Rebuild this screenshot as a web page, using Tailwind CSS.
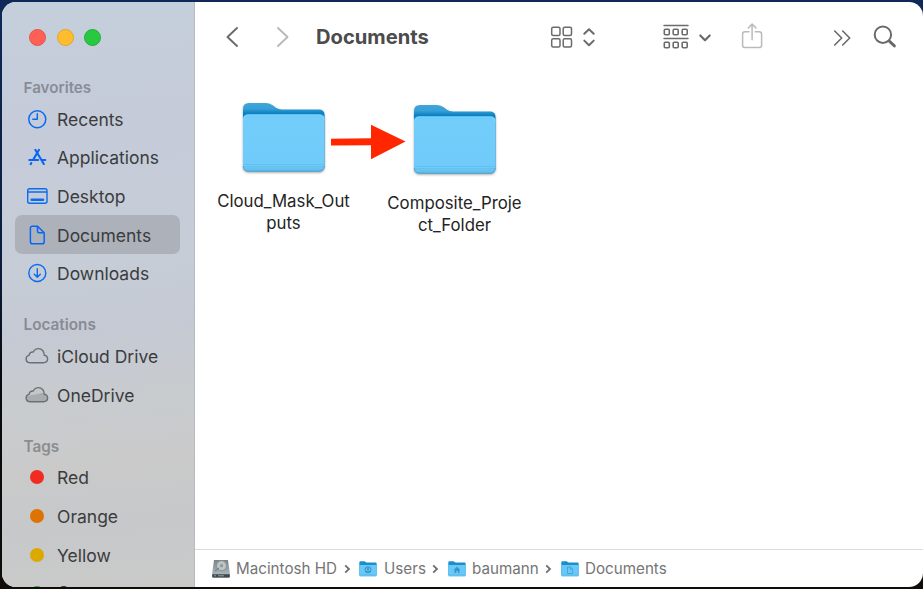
<!DOCTYPE html>
<html lang="en">
<head>
<meta charset="utf-8">
<title>Documents</title>
<script src="https://cdn.jsdelivr.net/npm/@tailwindcss/browser@4"></script>
</head>
<body class="w-[923px] h-[589px] overflow-hidden bg-[linear-gradient(180deg,#102858_0%,#0c1d3c_45%,#070a0e_65%,#100d08_100%)] font-['Inter','Liberation_Sans',sans-serif]">
<svg class="absolute size-0">
  <defs>
    <linearGradient id="back" x1="0" y1="0" x2="0" y2="1"><stop offset="0" stop-color="#41a5da"/><stop offset=".09" stop-color="#36a0d8"/><stop offset=".16" stop-color="#0b80c2"/><stop offset="1" stop-color="#0b80c2"/></linearGradient>
    <linearGradient id="front" x1="0" y1="0" x2="0" y2="1"><stop offset="0" stop-color="#6ccaf8"/><stop offset=".08" stop-color="#72cdfb"/><stop offset=".9" stop-color="#70cbfa"/><stop offset="1" stop-color="#5bb9e8"/></linearGradient>
    <linearGradient id="cloudfill" x1=".3" y1="0" x2=".6" y2="1"><stop offset=".45" stop-color="#b9bcbf" stop-opacity=".3"/><stop offset=".5" stop-color="#a9acaf"/></linearGradient>
    <linearGradient id="disk" x1="0" y1="0" x2="0" y2="1"><stop offset="0" stop-color="#7d8486"/><stop offset="1" stop-color="#b4c1c7"/></linearGradient>
    <symbol id="folder" viewBox="0 0 84 72">
      <path d="M1 65V7Q1 1 7 1H24Q28 1 31 3.5L34 5.800Q36.500 7.500 40 7.500H77Q82.500 7.500 82.500 13V65Z" fill="url(#back)"/>
      <path d="M1 17Q1 12.500 6 12.500H77.500Q82.500 12.500 82.500 17V64Q82.500 69.500 77 69.500H6.500Q1 69.500 1 64Z" fill="url(#front)"/>
      <path d="M2 17.500Q2.500 12.800 6 12.800H77.500Q81.300 12.800 82 17.500" fill="none" stroke="#8bd9fd" stroke-width=".7"/>
      <path d="M1.500 62.500H82M1.500 64.800H82" stroke="#5dbbe9" stroke-width=".7"/>
      <path d="M1.300 64Q1.300 69.300 6.500 69.300H77Q82.200 69.300 82.200 64" fill="none" stroke="#479dc8" stroke-width=".8"/>
    </symbol>
    <symbol id="minifolder" viewBox="0 0 18 16">
      <path d="M.3 14V1.500Q.3.300 1.500.300H5.500L7.500 1.500H16.500Q17.700 1.500 17.700 2.700V14Z" fill="#1b8ecb"/>
      <path d="M.3 4H17.700V14.300Q17.700 15.500 16.500 15.500H1.500Q.3 15.500.3 14.300Z" fill="#6ac8f8"/>
      <path d="M.5 14H17.500" stroke="#55b3e3" stroke-width=".8"/>
    </symbol>
    <symbol id="cloud" viewBox="0 0 24 18">
      <path d="M6 15.700H18.300C21 15.700 22.600 14.200 22.600 12C22.600 10 21.100 8.600 19.300 8.300C19.400 4.400 16.800 1.600 13.500 1.600C11 1.600 9.200 2.800 8.200 5C6.200 4.600 4.300 6 4.200 8.100C2.300 8.600 1.100 10 1.100 11.900C1.100 14.200 3 15.700 6 15.700Z" stroke="#6d6f72" stroke-width="1.400"/>
    </symbol>
  </defs>
</svg>
<div class="ml-[2px] mt-[2px] w-[921px] h-[585px] rounded-[14px] overflow-hidden flex bg-white">
  <aside class="w-[193px] shrink-0 h-full overflow-hidden border-r border-[#b7bac0] bg-[linear-gradient(175deg,#c5cfdc_0%,#c5cbd9_20%,#c6cdd7_45%,#c5c9d3_56%,#c8cccf_68%,#cacaca_78%,#c6c8ca_88%,#cacac9_100%)] text-[17.500px] text-[#3b3c3e]">
    <div class="h-[73.500px] pl-[27px] flex items-start gap-[10.500px] pt-[27px]">
      <span class="size-[17px] rounded-full bg-[#fe5f57] border border-[#e5534e]"></span>
      <span class="size-[17px] rounded-full bg-[#febc2e] border border-[#e0a62e]"></span>
      <span class="size-[17px] rounded-full bg-[#28c840] border border-[#25ad38]"></span>
    </div>
    <h2 class="h-[24px] pt-[2px] pl-[21.500px] flex items-center text-[15.200px] font-semibold text-[#888d97]">Favorites</h2>
    <nav>
      <div class="h-[38.660px] pl-[23px] flex items-center gap-[8px]">
        <svg class="w-[24px] h-[24px]" viewBox="0 0 24 24" fill="none" stroke="#0a6bf0" stroke-width="1.500" stroke-linecap="round" stroke-linejoin="round"><circle cx="12.300" cy="12.300" r="8.500"/><path d="M12.300 6.800V12.300H7.800"/></svg>
        <span class="pt-[2px]">Recents</span></div>
      <div class="h-[38.660px] pl-[23px] flex items-center gap-[8px]">
        <svg class="w-[24px] h-[24px]" viewBox="0 0 24 24" fill="none" stroke="#0a66f2" stroke-width="2.100" stroke-linecap="round"><path d="M10.300 4.800L18.800 19M14 4.800L8.300 14.600M4.300 15H13.200M17.300 15H20.300M6.300 18L5.600 19.200"/></svg>
        <span class="pt-[2px]">Applications</span></div>
      <div class="h-[38.660px] pl-[23px] flex items-center gap-[8px]">
        <svg class="w-[24px] h-[24px]" viewBox="0 0 24 24" fill="none" stroke="#0a6bf0" stroke-width="1.400"><rect x="2.700" y="4.700" width="19.300" height="14.600" rx="2"/><path d="M3 8H22"/><path d="M6.700 15.700H18" stroke-width="2.600" stroke-linecap="round"/></svg>
        <span class="pt-[1px]">Desktop</span></div>
      <div class="h-[38.660px] ml-[13px] w-[164.500px] rounded-[7px] bg-[#adb1b9] pl-[10px] flex items-center gap-[8px]">
        <svg class="w-[24px] h-[24px]" viewBox="0 0 24 24" fill="none" stroke="#0a66f2" stroke-width="1.500" stroke-linejoin="round"><path d="M7.500 3.200H12.500L19.200 9.800V18.700Q19.200 20.800 17.100 20.800H7.500Q5.400 20.800 5.400 18.700V5.300Q5.400 3.200 7.500 3.200Z"/><path d="M12.500 3.500V8.300Q12.500 9.800 14 9.800H19"/></svg>
        <span class="pt-[2px]">Documents</span></div>
      <div class="h-[38.660px] pl-[23px] flex items-center gap-[8px]">
        <svg class="w-[24px] h-[24px]" viewBox="0 0 24 24" fill="none" stroke="#0a6bf0" stroke-width="1.400" stroke-linecap="round" stroke-linejoin="round"><circle cx="12.300" cy="12" r="8.500"/><path d="M12.300 7.800V16M9.300 13.200L12.300 16.200L15.300 13.200"/></svg>
        <span class="pt-[1px]">Downloads</span></div>
    </nav>
    <h2 class="mt-[20px] h-[24px] pt-[2px] pl-[21.500px] flex items-center text-[15.300px] font-semibold text-[#888b94]">Locations</h2>
    <nav>
      <div class="h-[38.660px] pl-[23px] flex items-center gap-[8px]"><svg class="w-[24px] h-[18px]" fill="none"><use href="#cloud"/></svg><span class="pt-[2px]">iCloud Drive</span></div>
      <div class="h-[38.660px] pl-[23px] flex items-center gap-[8px]"><svg class="w-[24px] h-[18px]" fill="url(#cloudfill)"><use href="#cloud"/></svg><span class="pt-[2px]">OneDrive</span></div>
    </nav>
    <h2 class="mt-[20px] h-[24px] pt-[2px] pl-[21.500px] flex items-center text-[15.300px] font-semibold text-[#8c8d8f]">Tags</h2>
    <nav>
      <div class="h-[38.660px] pl-[28px] flex items-center gap-[13px]"><span class="size-[14px] rounded-full bg-[#f12b20]"></span><span class="pt-[1px]">Red</span></div>
      <div class="h-[38.660px] pl-[28px] flex items-center gap-[13px]"><span class="size-[14px] rounded-full bg-[#dd7300]"></span><span class="pt-[2px]">Orange</span></div>
      <div class="h-[38.660px] pl-[28px] flex items-center gap-[13px]"><span class="size-[14px] rounded-full bg-[#dca900]"></span><span class="pt-[2px]">Yellow</span></div>
      <div class="h-[38.660px] pl-[28px] flex items-center gap-[13px]"><span class="size-[14px] rounded-full bg-[#26a837]"></span><span>Green</span></div>
    </nav>
  </aside>
  <main class="flex-1 flex flex-col">
    <header class="h-[70px] flex items-center text-[#666]">
      <svg class="ml-[31px] w-[14px] h-[22px]" viewBox="0 0 14 22" fill="none" stroke="#6a6a6a" stroke-width="1.900" stroke-linecap="round" stroke-linejoin="round"><path d="M11 2L1.500 11L11 20"/></svg>
      <svg class="ml-[36px] w-[14px] h-[22px]" viewBox="0 0 14 22" fill="none" stroke="#b9b9b9" stroke-width="1.900" stroke-linecap="round" stroke-linejoin="round"><path d="M2 2L11.500 11L2 20"/></svg>
      <h1 class="ml-[26px] w-[234px] text-[20.150px] font-bold text-[#4b4b4b]">Documents</h1>
      <svg class="w-[46px] h-[24px]" viewBox="0 0 46 24" fill="none" stroke="#6b6b6b" stroke-width="1.500"><rect x="1.700" y="2.200" width="8.300" height="8.300" rx="1.500"/><rect x="13.200" y="2.200" width="8.300" height="8.300" rx="1.500"/><rect x="1.700" y="13.700" width="8.300" height="8.300" rx="1.500"/><rect x="13.200" y="13.700" width="8.300" height="8.300" rx="1.500"/><path d="M34.300 8.800L39 4.200L43.700 8.800M34.300 15.600L39 20.200L43.700 15.600" stroke-width="2" stroke-linecap="round" stroke-linejoin="round"/></svg>
      <svg class="ml-[66px] w-[50px] h-[26px]" viewBox="0 0 50 26" fill="none" stroke="#6b6b6b" stroke-width="1.600"><path d="M2 1.500H26M2 14.500H26" stroke-width="1.400" stroke-linecap="round"/><rect x="2.300" y="5.200" width="5" height="5.600" rx="1"/><rect x="11.200" y="5.200" width="5" height="5.600" rx="1"/><rect x="20.200" y="5.200" width="5" height="5.600" rx="1"/><rect x="2.300" y="18.200" width="5" height="5.600" rx="1"/><rect x="11.200" y="18.200" width="5" height="5.600" rx="1"/><rect x="20.200" y="18.200" width="5" height="5.600" rx="1"/><path d="M38.300 11.500L43 16.200L47.700 11.500" stroke-width="2.200" stroke-linecap="round" stroke-linejoin="round"/></svg>
      <svg class="ml-[29px] w-[22px] h-[28px]" viewBox="0 0 22 28" fill="none" stroke="#bababa" stroke-width="1.500" stroke-linecap="round" stroke-linejoin="round"><path d="M8 8.700H4Q1.600 8.700 1.600 11.100V22.200Q1.600 24.600 4 24.600H18.200Q20.600 24.600 20.600 22.200V11.100Q20.600 8.700 18.200 8.700H14.200M11.100 16.700V1.300M7.200 5L11.100 1.100L15 5"/></svg>
      <svg class="ml-[70px] w-[18px] h-[18px]" viewBox="0 0 18 18" fill="none" stroke="#6b6b6b" stroke-width="1.600" stroke-linecap="round" stroke-linejoin="round"><path d="M1.700 3L8.700 10L1.700 17M9.700 3L16.700 10L9.700 17"/></svg>
      <svg class="ml-[22px] w-[24px] h-[24px]" viewBox="0 0 24 24" fill="none" stroke="#6a6a6a" stroke-linecap="round"><circle cx="9.900" cy="9.700" r="8.200" stroke-width="2"/><path d="M16.300 16.100L21.400 20.900" stroke-width="2.900"/></svg>
    </header>
    <section class="flex-1 flex items-start pl-[18px] pt-[30px] text-[16.800px] leading-[22px] text-[#242424] text-center">
      <figure class="w-[142px] flex flex-col items-center">
        <svg class="w-[84px] h-[72px] drop-shadow-[0_1px_1px_#00000055]"><use href="#folder"/></svg>
        <figcaption class="mt-[16px] -ml-px">Cloud_Mask_Out<br>puts</figcaption>
      </figure>
      <svg class="mt-[22px] -ml-[24px] -mr-[22px] w-[75px] h-[36px] shrink-0" viewBox="0 0 75 36"><path d="M0 14.700L40 14.300V.700L74.500 17.500L40 35.200V21.300L0 21.500Z" fill="#ff2600"/></svg>
      <figure class="mt-[1.500px] w-[142px] flex flex-col items-center">
        <svg class="w-[84px] h-[72px] drop-shadow-[0_1px_1px_#00000055]"><use href="#folder"/></svg>
        <figcaption class="mt-[16px] -ml-px">Composite_Proje<br>ct_Folder</figcaption>
      </figure>
    </section>
    <footer class="h-[38px] border-t border-[#dcdcdc] pl-[17px] flex items-center text-[15.200px] text-[#757575]">
      <svg class="w-[18px] h-[20px]" viewBox="0 0 18 20"><path d="M2 1H16L17.800 14V18Q17.800 19 16.800 19H1.200Q.2 19 .2 18V14Z" fill="url(#disk)"/><circle cx="9.500" cy="6.700" r="5" fill="#bcc4c7" stroke="#7f8a8f" stroke-width=".8"/><circle cx="9.500" cy="6.700" r="1.600" fill="#8e999d"/><path d="M3 12L7 9" stroke="#6c787d"/><path d="M.2 15.200H17.800V17.500Q17.800 18.500 16.800 18.500H1.200Q.2 18.500 .2 17.500Z" fill="#3f474b"/><path d="M2 16.800H4M6 16.800H12" stroke="#93a0a5"/></svg>
      <span class="ml-[6px] w-[102px] pt-[1px] whitespace-nowrap">Macintosh HD</span>
      <svg class="ml-[6px] w-[7px] h-[10px]" viewBox="0 0 7 10" fill="none" stroke="#6f6f6f" stroke-width="1.800"><path d="M1.200 1.300L5 5L1.200 8.700"/></svg>
      <svg class="ml-[8px] w-[18px] h-[16px]" viewBox="0 0 18 16" fill="none" stroke="#2f91c8"><use href="#minifolder" stroke="none"/><circle cx="9" cy="8.800" r="3"/><circle cx="9" cy="8" r=".8"/><path d="M7 10.800Q9 9 11 10.800"/></svg>
      <span class="ml-[7px] w-[42px] pt-[1px]">Users</span>
      <svg class="ml-[6px] w-[7px] h-[10px]" viewBox="0 0 7 10" fill="none" stroke="#6f6f6f" stroke-width="1.800"><path d="M1.200 1.300L5 5L1.200 8.700"/></svg>
      <svg class="ml-[9px] w-[18px] h-[16px]" viewBox="0 0 18 16"><use href="#minifolder"/><path d="M9 5.800L12.500 9H11.500V12H9.800V10H8.200V12H6.500V9H5.500Z" fill="#3797cc"/></svg>
      <span class="ml-[6px] w-[67px] pt-[1px]">baumann</span>
      <svg class="ml-[6px] w-[7px] h-[10px]" viewBox="0 0 7 10" fill="none" stroke="#6f6f6f" stroke-width="1.800"><path d="M1.200 1.300L5 5L1.200 8.700"/></svg>
      <svg class="ml-[9px] w-[18px] h-[16px]" viewBox="0 0 18 16"><use href="#minifolder"/><path d="M6.500 6H9.500L11.700 8V12.500H6.500ZM9.300 6V8.200H11.700" fill="none" stroke="#3a9fd3" stroke-width=".8"/></svg>
      <span class="ml-[6px] pt-[1px]">Documents</span>
    </footer>
  </main>
</div>
</body>
</html>
